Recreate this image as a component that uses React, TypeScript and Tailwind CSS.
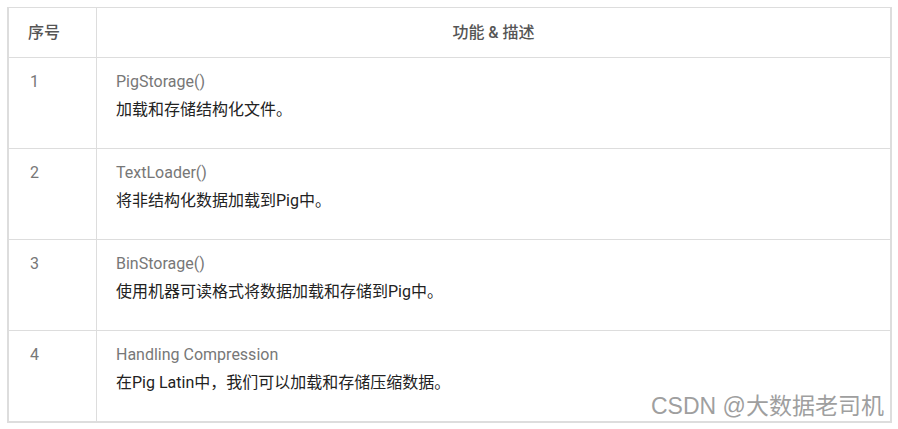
import React from 'react';

// rows of the Pig load/store table
const rows = [
  { no: '1', fn: 'PigStorage()', desc: '加载和存储结构化文件。' },
  { no: '2', fn: 'TextLoader()', desc: '将非结构化数据加载到Pig中。' },
  { no: '3', fn: 'BinStorage()', desc: '使用机器可读格式将数据加载和存储到Pig中。' },
  { no: '4', fn: 'Handling Compression', desc: '在Pig Latin中，我们可以加载和存储压缩数据。' },
];

const font = { fontFamily: 'Roboto, "Noto Sans CJK SC", sans-serif' };

export default function App() {
  return (
    <div className="relative w-[898px] h-[429px] bg-white" style={font}>
      <div className="absolute left-[7px] top-[7px] w-[885px] border-t border-l-2 border-r-2 border-b-2 border-[#dddddd]">
        {/* HEADER */}
        <div className="flex h-[50px] border-b border-[#dddddd] text-[16px] font-medium text-[#555555]">
          <div className="w-[88px] shrink-0 border-r border-[#dddddd] flex items-center pl-[19px]">序号</div>
          <div className="flex-1 flex items-center justify-center">功能 &amp; 描述</div>
        </div>

        {rows.map((r, i) => (
          <div
            key={r.no}
            className={`flex ${i < rows.length - 1 ? 'h-[91px] border-b border-[#dddddd]' : 'h-[90px]'}`}
          >
            <div className="w-[88px] shrink-0 border-r border-[#dddddd] pl-[21px] pt-[10px] text-[16px] leading-[28px] text-[#777777]">
              {r.no}
            </div>
            <div className="flex-1 pl-[19px] pt-[10px] text-[16px] leading-[28px]">
              <div className="text-[#777777]">{r.fn}</div>
              <div className="text-[#222222]">{r.desc}</div>
            </div>
          </div>
        ))}
      </div>

      {/* watermark */}
      <div
        className="absolute left-[651px] top-[390px] text-[23px] leading-[32px] text-[#9f9f9f] whitespace-nowrap"
        style={{ fontFamily: '"Liberation Sans", "Noto Sans CJK SC", sans-serif', textShadow: '1px 1px 0 #ffffff, -1px -1px 0 #ffffff' }}
      >
        CSDN @大数据老司机
      </div>
    </div>
  );
}
